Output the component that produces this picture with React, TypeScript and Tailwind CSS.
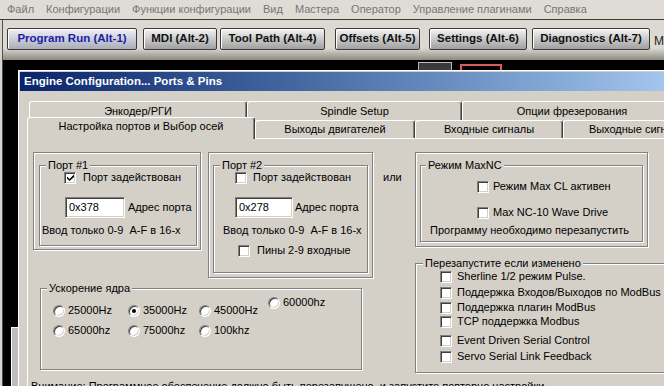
import React from 'react';

const FONT = "[font-family:'Liberation_Sans',Arial,Helvetica,sans-serif]";
const ETCHED = 'border border-[#808080] shadow-[inset_1px_1px_0_#fff,1px_1px_0_#fff]';
const SUNKEN =
  'border border-t-[#808080] border-l-[#808080] border-b-white border-r-white shadow-[inset_1px_1px_0_#404040,inset_-1px_-1px_0_#d4d0c8]';

const MENU = [
  'Файл',
  'Конфигурации',
  'Функции конфигурации',
  'Вид',
  'Мастера',
  'Оператор',
  'Управление плагинами',
  'Справка',
];

const BUTTONS = [
  { label: 'Program Run (Alt-1)', cls: 'ml-[4px] w-[130px] from-[#eef1f7] to-[#a9adb8] text-[#1e1ea6]' },
  { label: 'MDI (Alt-2)', cls: 'ml-[6px] w-[74px] from-[#f4f4f4] to-[#a0a0a0] text-[#111]' },
  { label: 'Tool Path (Alt-4)', cls: 'ml-[3px] w-[105px] from-[#f4f4f4] to-[#a0a0a0] text-[#111]' },
  { label: 'Offsets (Alt-5)', cls: 'ml-[10px] w-[85px] from-[#f4f4f4] to-[#a0a0a0] text-[#111]' },
  { label: 'Settings (Alt-6)', cls: 'ml-[9px] w-[98px] from-[#f4f4f4] to-[#a0a0a0] text-[#111]' },
  { label: 'Diagnostics (Alt-7)', cls: 'ml-[5px] w-[118px] from-[#f4f4f4] to-[#a0a0a0] text-[#111]' },
];

const BACK_TABS = [
  { label: 'Энкодер/РГИ', cls: 'w-[218px]' },
  { label: 'Spindle Setup', cls: 'w-[215px]' },
  { label: 'Опции фрезерования', cls: 'w-[220px]' },
];

const FRONT_TABS = [
  { label: 'Выходы двигателей', cls: 'w-[160px]' },
  { label: 'Входные сигналы', cls: 'w-[148px]' },
  { label: 'Выходные сигналы', cls: 'w-[150px]' },
];

const RESTART = [
  { label: 'Sherline 1/2 режим Pulse.', cls: 'mt-[6px]' },
  { label: 'Поддержка Входов/Выходов по ModBus', cls: 'mt-[3px]' },
  { label: 'Поддержка плагин ModBus', cls: 'mt-[2px]' },
  { label: 'TCP поддержка Modbus', cls: 'mt-[1px]' },
  { label: 'Event Driven Serial Control', cls: 'mt-[6px]' },
  { label: 'Servo Serial Link Feedback', cls: 'mt-[3px]' },
];

function CheckBox({ checked = false }: { checked?: boolean }) {
  return (
    <span className={`flex h-[12px] w-[12px] shrink-0 items-center justify-center bg-white ${SUNKEN}`}>
      {checked && (
        <svg width="7" height="7" viewBox="0 0 7 7" aria-hidden="true">
          <polygon points="0,2.5 2.5,5 7,0.5 7,3 2.5,7 0,4.5" fill="#000" />
        </svg>
      )}
    </span>
  );
}

function Radio({ on = false }: { on?: boolean }) {
  return (
    <span
      className={`flex h-[12px] w-[12px] shrink-0 items-center justify-center rounded-full bg-white ${SUNKEN}`}
    >
      {on && <span className="h-[4px] w-[4px] rounded-full bg-black" />}
    </span>
  );
}

function TextBox({ value, cls }: { value: string; cls: string }) {
  return (
    <div className={`flex h-[21px] shrink-0 items-center bg-white pl-[3px] ${SUNKEN} ${cls}`}>{value}</div>
  );
}

function Group({
  title,
  legendCls,
  cls,
  children,
}: {
  title: string;
  legendCls: string;
  cls: string;
  children: React.ReactNode;
}) {
  return (
    <div className={`relative shrink-0 ${ETCHED} ${cls}`}>
      <span className={`absolute top-[-7px] whitespace-nowrap bg-[#d4d0c8] px-[2px] leading-[13px] ${legendCls}`}>
        {title}
      </span>
      {children}
    </div>
  );
}

function CheckRow({
  label,
  checked,
  cls,
}: {
  label: string;
  checked?: boolean;
  cls: string;
}) {
  return (
    <div className={`flex h-[13px] items-center whitespace-nowrap ${cls}`}>
      <CheckBox checked={checked} />
      <span>{label}</span>
    </div>
  );
}

function RadioCell({ label, on, cls }: { label: string; on?: boolean; cls: string }) {
  return (
    <div className={`flex h-[13px] items-center gap-[3px] whitespace-nowrap ${cls}`}>
      <Radio on={on} />
      <span>{label}</span>
    </div>
  );
}

function PortsPanel() {
  return (
    <div className="ml-[7px] border-l border-t border-white pt-[13px]">
      <div className="flex pl-[5px]">
        <div className="flex w-[382px] shrink-0 flex-col">
          <div className="flex items-start">
            <div className={`h-[98px] w-[168px] shrink-0 pl-[5px] pt-[12px] ${ETCHED}`}>
              <Group title="Порт #1" legendCls="left-[6px]" cls="h-[81px] w-[158px]">
                <CheckRow label="Порт задействован" checked cls="ml-[24px] mt-[5px] gap-[7px]" />
                <div className="ml-[25px] mt-[13px] flex items-center gap-[3px] whitespace-nowrap">
                  <TextBox value="0x378" cls="w-[60px]" />
                  <span>Адрес порта</span>
                </div>
                <div className="ml-[2px] mt-[6px] whitespace-pre leading-[13px]">Ввод только 0-9  A-F в 16-х</div>
              </Group>
            </div>
            <div className={`ml-[7px] h-[126px] w-[165px] shrink-0 pl-[4px] pt-[12px] ${ETCHED}`}>
              <Group title="Порт #2" legendCls="left-[6px]" cls="h-[108px] w-[155px]">
                <CheckRow label="Порт задействован" cls="ml-[21px] mt-[5px] gap-[6px]" />
                <div className="ml-[21px] mt-[13px] flex items-center gap-[2px] whitespace-nowrap">
                  <TextBox value="0x278" cls="w-[58px]" />
                  <span>Адрес порта</span>
                </div>
                <div className="ml-[9px] mt-[6px] whitespace-pre leading-[13px]">Ввод только 0-9  A-F в 16-х</div>
                <CheckRow label="Пины 2-9 входные" cls="ml-[24px] mt-[7px] gap-[7px]" />
              </Group>
            </div>
            <span className="ml-[10px] mt-[19px] leading-[13px]">или</span>
          </div>
          <Group title="Ускорение ядра" legendCls="left-[6px]" cls="ml-[7px] mt-[10px] h-[82px] w-[322px]">
            <div className="ml-[12px] mt-[15px] flex items-start">
              <RadioCell label="25000Hz" cls="w-[75px]" />
              <RadioCell label="35000Hz" on cls="w-[71px]" />
              <RadioCell label="45000Hz" cls="w-[69px]" />
              <RadioCell label="60000hz" cls="-mt-[8px]" />
            </div>
            <div className="ml-[12px] mt-[7px] flex items-start">
              <RadioCell label="65000hz" cls="w-[75px]" />
              <RadioCell label="75000hz" cls="w-[71px]" />
              <RadioCell label="100khz" cls="w-[69px]" />
            </div>
          </Group>
        </div>
        <div className="flex flex-col items-start">
          <div className={`h-[95px] w-[233px] shrink-0 pl-[4px] pt-[12px] ${ETCHED}`}>
            <Group title="Режим MaxNC" legendCls="left-[5px]" cls="h-[77px] w-[223px]">
              <CheckRow label="Режим Max CL активен" cls="ml-[56px] mt-[14px] gap-[4px]" />
              <CheckRow label="Max NC-10 Wave Drive" cls="ml-[56px] mt-[13px] gap-[4px]" />
              <div className="ml-[9px] mt-[5px] whitespace-nowrap leading-[13px]">
                Программу необходимо перезапустить
              </div>
            </Group>
          </div>
          <Group title="Перезапустите если изменено" legendCls="left-[7px]" cls="mt-[16px] h-[110px] w-[260px]">
            {RESTART.map((r) => (
              <CheckRow key={r.label} label={r.label} cls={`ml-[24px] gap-[5px] ${r.cls}`} />
            ))}
          </Group>
        </div>
      </div>
      <div className="mt-[7px] whitespace-nowrap pl-[3px] leading-[13px]">
        Внимание: Программное обеспечение должно быть перезапущено, и запустите повторно настройки.
      </div>
    </div>
  );
}

function Dialog() {
  return (
    <div className="w-[662px] shrink-0 border-l border-t border-white bg-[#d4d0c8] pl-px pt-px">
      <div className="flex h-[19px] items-center bg-linear-to-r from-[#0a246a] to-[#a6caf0] pl-[4px] text-[11.5px] font-bold text-white">
        Engine Configuration... Ports &amp; Pins
      </div>
      <div className="ml-[9px] mt-[10px] flex h-[19px]">
        {BACK_TABS.map((t) => (
          <div
            key={t.label}
            className={`flex h-[19px] shrink-0 justify-center rounded-t-[3px] border-l border-r border-t border-white border-r-[#404040] pt-[3px] leading-[13px] shadow-[inset_-1px_0_0_#808080] ${t.cls}`}
          >
            {t.label}
          </div>
        ))}
      </div>
      <div className="ml-[7px] flex h-[18px] items-end">
        <div className="relative z-10 -mb-px flex h-[22px] w-[228px] shrink-0 justify-center rounded-t-[3px] border-l border-r border-t border-white border-r-[#404040] bg-[#d4d0c8] pt-[2px] leading-[13px] shadow-[inset_-1px_0_0_#808080]">
          Настройка портов и Выбор осей
        </div>
        {FRONT_TABS.map((t) => (
          <div
            key={t.label}
            className={`flex h-[18px] shrink-0 items-center justify-center overflow-hidden whitespace-nowrap rounded-t-[3px] border-l border-r border-t border-white border-r-[#404040] leading-[13px] shadow-[inset_-1px_0_0_#808080] ${t.cls}`}
          >
            {t.label}
          </div>
        ))}
      </div>
      <PortsPanel />
    </div>
  );
}

export default function App() {
  return (
    <div className={`h-[386px] w-[664px] overflow-hidden bg-[#d4d0c8] text-[11px] text-black ${FONT}`}>
      <div className="flex h-[19px] items-center gap-[12px] bg-[#dfdcd5] pl-[7px] text-[#767676]">
        {MENU.map((m) => (
          <span key={m} className="whitespace-nowrap">
            {m}
          </span>
        ))}
      </div>
      <div className="h-px bg-[#3a3a3a]" />
      <div className="flex">
        <div className="w-[2px] shrink-0 bg-[#d8d5ce]" />
        <div className="w-px shrink-0 bg-[#505050]" />
        <div className="min-w-0 flex-1">
          <div className="flex h-[40px] items-start bg-linear-to-b from-[#dcd9d2] from-70% to-[#8e8b85] pt-[8px]">
            {BUTTONS.map((b) => (
              <div
                key={b.label}
                className={`flex h-[22px] shrink-0 items-center justify-center whitespace-nowrap rounded-[2px] border border-[#3a3a3a] bg-linear-to-b text-[11.5px] font-bold shadow-[inset_1px_1px_0_#fff] ${b.cls}`}
              >
                {b.label}
              </div>
            ))}
            <span className="ml-[4px] mt-[4px] text-[12px] text-[#222]">M</span>
          </div>
          <div className="flex h-[10px] items-end bg-black">
            <div className="ml-[415px] h-[8px] w-[34px] border border-b-0 border-[#b8b8b8] bg-[#3a3a3a]" />
            <div className="ml-[8px] h-[6px] w-[42px] border-2 border-b-0 border-[#d85a5a] bg-black" />
          </div>
          <div className="flex h-[316px]">
            <div className="flex w-[15px] shrink-0 flex-col bg-black">
              <div className="ml-[8px] mt-auto h-[59px] w-[7px] border-l border-t border-white bg-[#bdbdbd]" />
            </div>
            <Dialog />
          </div>
        </div>
      </div>
    </div>
  );
}
